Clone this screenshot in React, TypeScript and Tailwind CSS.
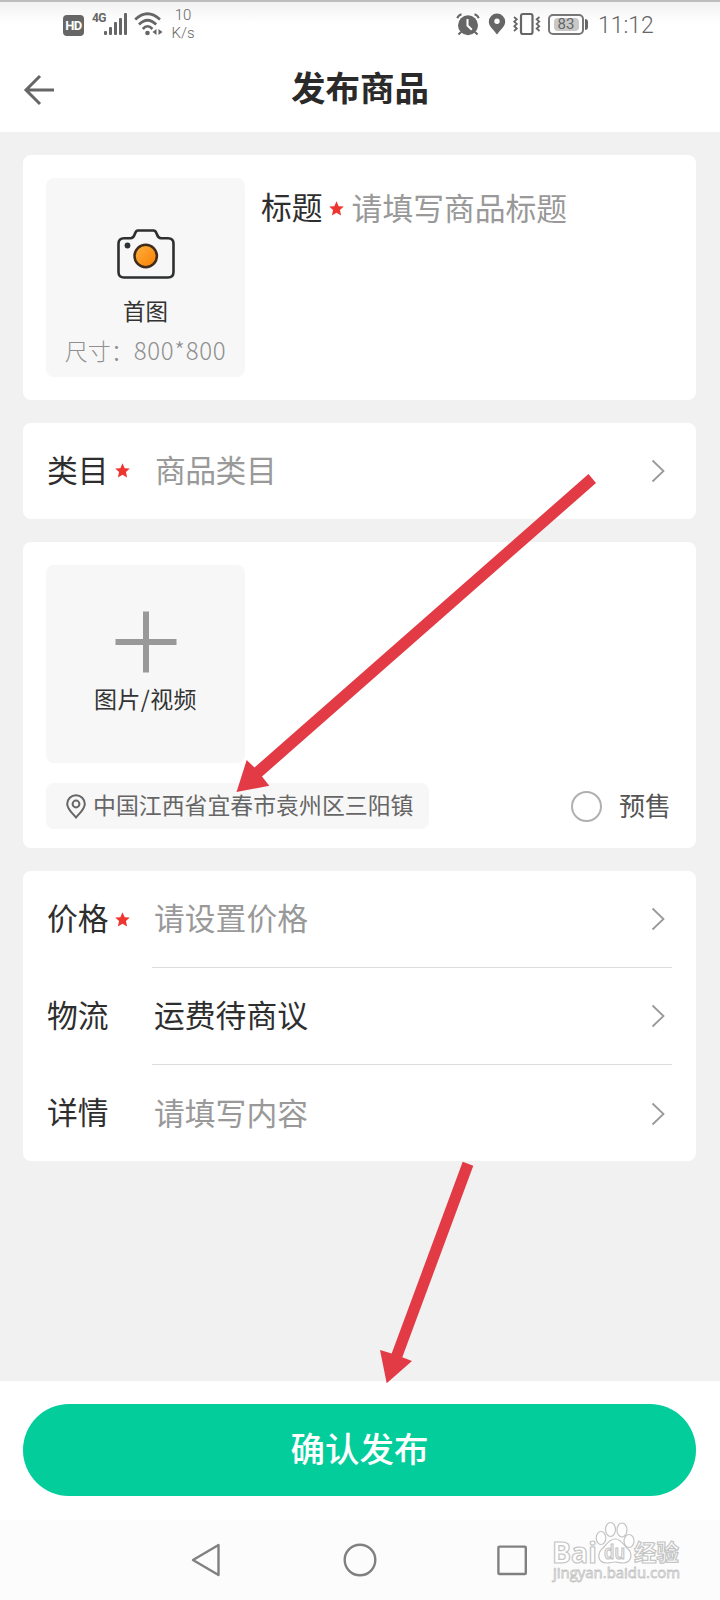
import type { ReactNode } from "react";

const FORM_ROWS = [
  { label: "价格", value: "请设置价格", required: true, filled: false },
  { label: "物流", value: "运费待商议", required: false, filled: true },
  { label: "详情", value: "请填写内容", required: false, filled: false },
];

// --- Icons ---

function Star({ className = "" }: { className?: string }) {
  return (
    <svg width="15" height="15" viewBox="0 0 14 14" className={`shrink-0 ${className}`}>
      <path
        d="M7 0.2 L9 4.8 L13.8 5.2 L10.2 8.5 L11.3 13.5 L7 10.9 L2.7 13.5 L3.8 8.5 L0.2 5.2 L5 4.8 Z"
        fill="#ee3530"
      />
    </svg>
  );
}

function Chevron() {
  return (
    <svg width="14" height="24" viewBox="0 0 14 24" fill="none" className="mr-[7px] shrink-0">
      <path d="M1.5 1.5 L12.5 12 L1.5 22.5" stroke="#999" strokeWidth="1.8" />
    </svg>
  );
}

function CameraIcon() {
  return (
    <svg width="58" height="50" viewBox="0 0 58 50" fill="none">
      <defs>
        <linearGradient id="lens" x1="0" y1="0" x2="1" y2="1">
          <stop offset="0" stopColor="#ffb340" />
          <stop offset="1" stopColor="#f97d00" />
        </linearGradient>
      </defs>
      <path
        d="M7 9.2 H13.5 C16 9.2 17 7.5 17.8 5 C18.6 2.5 19.2 1.5 21 1.5 H36.5 C38.3 1.5 39 2.5 39.8 5 C40.6 7.5 41.6 9.2 44 9.2 H51 Q56.5 9.2 56.5 14.7 V43 Q56.5 48.5 51 48.5 H7 Q1.5 48.5 1.5 43 V14.7 Q1.5 9.2 7 9.2 Z"
        stroke="#2d2f30"
        strokeWidth="2.6"
      />
      <circle cx="10.5" cy="16.5" r="2.9" fill="#2d3334" />
      <circle cx="28.7" cy="27" r="11.2" fill="url(#lens)" stroke="#3f2c1c" strokeWidth="2.5" />
    </svg>
  );
}

function PinIcon() {
  return (
    <svg width="20" height="25" viewBox="0 0 20 25" fill="none" stroke="#666" strokeWidth="2" className="shrink-0">
      <path d="M10 23.5 C7.5 20.2 1.2 15.5 1.2 10 A8.8 8.8 0 0 1 18.8 10 C18.8 15.5 12.5 20.2 10 23.5 Z" />
      <circle cx="10" cy="10" r="3.4" />
    </svg>
  );
}

// --- Status bar ---

function StatusBar() {
  return (
    <div className="flex h-12 items-center bg-linear-to-b from-[#f2f2f2] to-white to-45% border-t-2 border-[#bdbdbd] pl-[63px] font-[Roboto,sans-serif] text-[#666]">
      <div className="flex h-[21px] w-[21px] items-center justify-center rounded-[4px] bg-[#666] text-[13px] font-bold leading-none tracking-tighter text-white">
        HD
      </div>
      <div className="ml-2 -mt-[14px] w-[12px] text-[12px] font-bold leading-none tracking-tighter">4G</div>
      <svg width="24" height="22" viewBox="0 0 24 22" fill="#666" className="-mt-[2px]">
        <rect x="0" y="18" width="3" height="4" rx="1" />
        <rect x="5" y="14" width="3" height="8" rx="1" />
        <rect x="10" y="9" width="3" height="13" rx="1" />
        <rect x="15" y="5" width="3" height="17" rx="1" />
        <rect x="20" y="0" width="3" height="22" rx="1" />
      </svg>
      <svg width="30" height="24" viewBox="0 0 30 24" fill="none" stroke="#666" className="-mt-[2px] ml-[6px]">
        <path d="M1.2 7.5 Q13.5 -4 26 7.5" strokeWidth="2.7" />
        <path d="M5 12.5 Q13.5 4 22.2 12.5" strokeWidth="2.7" />
        <path d="M8.8 17 Q13.5 11.5 18.4 17" strokeWidth="2.7" />
        <circle cx="13.5" cy="21" r="2.3" fill="#666" stroke="none" />
        <path d="M22.5 17 V23 L18.5 20 Z M24.5 17 L28.5 20 L24.5 23 Z" fill="#666" stroke="none" />
      </svg>
      <div className="-mt-[2px] ml-[7px] w-6 text-center text-[15px] font-light leading-[18px]">
        <div>10</div>
        <div>K/s</div>
      </div>
      <svg width="24" height="23" viewBox="0 0 24 23" className="-mt-[2px] ml-[261px]">
        <circle cx="12" cy="12.2" r="10" fill="#666" />
        <path d="M1.3 5.3 Q2.3 2.2 5.5 1.3 M18.5 1.3 Q21.7 2.2 22.7 5.3 M5 19 L2.5 21.5 M19 19 L21.5 21.5" stroke="#666" strokeWidth="2" fill="none" />
        <path d="M11.5 6 V12.5 L15.8 16.8" stroke="#fff" strokeWidth="2" fill="none" />
      </svg>
      <svg width="18" height="22" viewBox="0 0 18 22" className="-mt-[2px] ml-2">
        <path
          d="M9 0.5 A8.2 8.2 0 0 1 17.2 8.7 C17.2 13.5 12 17 9 21.5 C6 17 0.8 13.5 0.8 8.7 A8.2 8.2 0 0 1 9 0.5 Z M9 5.5 A2.7 2.7 0 1 0 9 10.9 A2.7 2.7 0 1 0 9 5.5 Z"
          fill="#666"
          fillRule="evenodd"
        />
      </svg>
      <svg width="28" height="24" viewBox="0 0 28 24" fill="none" stroke="#666" strokeWidth="2" className="-mt-[2px] ml-[7px]">
        <rect x="8" y="2" width="11.5" height="20" rx="2" strokeWidth="2.2" />
        <path d="M1 5 L3.8 7.3 L1.3 9.6 L3.8 11.9 L1.3 14.2 L3.8 16.5 L1 19 M26.5 5 L23.7 7.3 L26.2 9.6 L23.7 11.9 L26.2 14.2 L23.7 16.5 L26.5 19" strokeWidth="1.8" />
      </svg>
      <div className="-mt-[2px] ml-[7px] flex h-[21px] w-[36px] items-center justify-center rounded-[5px] border-2 border-[#777] p-[2px]">
        <div className="flex h-full w-[25px] items-center justify-center rounded-sm bg-[#c8c8c8] text-[15px] leading-none">
          83
        </div>
      </div>
      <div className="-mt-[2px] ml-[1px] h-[11px] w-[3px] rounded-r bg-[#666]" />
      <div className="ml-[10px] text-[23px] font-light leading-none">11:12</div>
    </div>
  );
}

// --- Form pieces ---

function Card({ className, children }: { className: string; children: ReactNode }) {
  return <section className={`ml-[23px] mr-[24px] rounded-lg bg-white ${className}`}>{children}</section>;
}

function Label({ children, required = false }: { children: ReactNode; required?: boolean }) {
  return (
    <div className="flex w-[105px] shrink-0 items-center text-[#2e2e2e]">
      <span className="-mt-[4px]">{children}</span>
      {required && <Star className="ml-[6px]" />}
    </div>
  );
}

// --- Red guide arrows laid over the form ---

function GuideArrows() {
  return (
    <svg width="720" height="1600" viewBox="0 0 720 1600" fill="#e23b45" className="pointer-events-none absolute left-0 top-0">
      <polygon points="236.5,792 246.7,760 254.5,767.5 588.5,474 596,483 262,776.5 269.3,785.7" />
      <polygon points="386.7,1383.3 380,1350 391.7,1353.5 462.7,1161.7 473.3,1165.7 402.3,1357.3 412,1361" />
    </svg>
  );
}

function Watermark() {
  return (
    <svg
      width="136"
      height="66"
      viewBox="0 0 136 66"
      className="pointer-events-none absolute left-[550px] top-[1520px] font-['Open_Sans','Noto_Sans_CJK_SC',sans-serif]"
      fill="#fff"
      stroke="#c4c4c4"
      strokeWidth="1.2"
    >
      <text x="2" y="43" fontSize="29" fontWeight="700" textLength="45" lengthAdjust="spacingAndGlyphs">
        Bai
      </text>
      <ellipse cx="51" cy="18" rx="4.8" ry="6.5" />
      <ellipse cx="60.5" cy="9.5" rx="5" ry="7" />
      <ellipse cx="72" cy="10" rx="5" ry="7" />
      <ellipse cx="79" cy="21" rx="5" ry="6.5" />
      <path d="M65 19 C71 19 73 24 77 28 C84 34 81 43 73 43 C70 43 67 42 65 42 C62 42 60 43 57 43 C48 43 46 34 53 28 C57 24 59 19 65 19 Z" />
      <text x="54" y="39" fontSize="19" fontWeight="600" textLength="21" lengthAdjust="spacingAndGlyphs">
        du
      </text>
      <text x="84" y="41" fontSize="23" fontWeight="700" textLength="45" lengthAdjust="spacingAndGlyphs">
        经验
      </text>
      <text x="3" y="58" fontSize="15" strokeWidth="0.8" textLength="127" lengthAdjust="spacingAndGlyphs">
        jingyan.baidu.com
      </text>
    </svg>
  );
}

export default function App() {
  return (
    <div className="relative flex h-[1600px] w-[720px] flex-col overflow-hidden bg-[#f1f1f1] font-['Noto_Sans_CJK_SC',sans-serif] text-[30.8px] leading-none">
      <StatusBar />

      {/* Title bar */}
      <header className="flex h-[84px] items-center bg-white pl-[23px]">
        <svg width="32" height="32" viewBox="0 0 32 32" fill="none" stroke="#666" strokeWidth="3">
          <path d="M31 16 H3 M17 2 L3 16 L17 30" />
        </svg>
        <h1 className="-mt-[7px] ml-[236px] text-[34.5px] font-bold text-[#2a2a2a]">发布商品</h1>
      </header>

      {/* Main picture and title */}
      <Card className="mt-[23px] flex h-[245px] pl-[23px] pt-[23px]">
        <div className="flex h-[199px] w-[199px] shrink-0 flex-col items-center rounded-lg bg-[#f7f7f7] pt-[51px]">
          <CameraIcon />
          <div className="mt-[20px] text-[22.5px] text-[#333]">首图</div>
          <div className="mt-[16px] whitespace-nowrap text-[23px] font-light text-[#8f8f8f]">
            尺寸：<span className="text-[24px] tracking-[0.7px]">800*800</span>
          </div>
        </div>
        <div className="ml-[16px] flex h-[60px] items-center">
          <span className="-mt-[4px] text-[#2e2e2e]">标题</span>
          <Star className="ml-[6px]" />
          <span className="-mt-[2px] ml-[8px] text-[#999]">请填写商品标题</span>
        </div>
      </Card>

      {/* Category */}
      <Card className="mt-[23px] flex h-[96px] items-center px-[24px]">
        <Label required>类目</Label>
        <span className="-mt-[3px] grow pl-[3px] tracking-[-0.5px] text-[#999]">商品类目</span>
        <Chevron />
      </Card>

      {/* Media and location */}
      <Card className="mt-[23px] h-[306px] pl-[23px] pr-[25px] pt-[23px]">
        <div className="flex h-[198px] w-[199px] flex-col items-center rounded-lg bg-[#f7f7f7] pt-[46px]">
          <svg width="62" height="62" viewBox="0 0 62 62" stroke="#999" strokeWidth="6">
            <path d="M31 0.5 V61.5 M0.5 31 H61.5" />
          </svg>
          <div className="mt-[14px] text-[23px] tracking-[0.4px] text-[#333]">图片/视频</div>
        </div>
        <div className="mt-[20px] flex items-center">
          <div className="flex h-[46px] w-[383px] items-center rounded-lg bg-[#f7f7f7] pl-[20px] text-[22.9px] text-[#666]">
            <PinIcon />
            <span className="-mt-[4px] ml-[7px] whitespace-nowrap">中国江西省宜春市袁州区三阳镇</span>
          </div>
          <div className="ml-auto flex items-center text-[26px] text-[#555]">
            <span className="mr-[17px] h-[31px] w-[31px] rounded-full border-2 border-[#b0b0b0]" />
            <span className="-mt-[2px]">预售</span>
          </div>
        </div>
      </Card>

      {/* Price, shipping and details */}
      <Card className="mt-[23px] h-[290px] px-[24px]">
        {FORM_ROWS.map((row, i) => (
          <div key={row.label} className="flex h-[97px]">
            <div className="flex items-center">
              <Label required={row.required}>{row.label}</Label>
            </div>
            <div className={`flex grow items-center ${i < FORM_ROWS.length - 1 ? "border-b border-[#dcdcdc]" : ""}`}>
              <span className={`-mt-[3px] grow pl-[2px] ${row.filled ? "text-[#2e2e2e]" : "text-[#999]"}`}>
                {row.value}
              </span>
              <Chevron />
            </div>
          </div>
        ))}
      </Card>

      {/* Submit */}
      <footer className="mt-auto h-[139px] bg-white pl-[23px] pr-[24px] pt-[23px]">
        <button
          type="button"
          className="h-[92px] w-full rounded-full bg-[#02cd9b] pb-[6px] text-[34.5px] font-medium text-white"
        >
          确认发布
        </button>
      </footer>

      {/* System navigation */}
      <nav className="h-[80px] bg-[#fcfcfc] pl-[190px] pt-[22px]">
        <svg width="340" height="36" viewBox="0 0 340 36" fill="none" stroke="#808080" strokeWidth="2.4" strokeLinejoin="round">
          <path d="M3 18 L28.5 3 V33 Z" />
          <circle cx="170" cy="18" r="15.3" />
          <rect x="308.4" y="4.6" width="27.4" height="27.4" rx="1" />
        </svg>
      </nav>

      <GuideArrows />
      <Watermark />
    </div>
  );
}
